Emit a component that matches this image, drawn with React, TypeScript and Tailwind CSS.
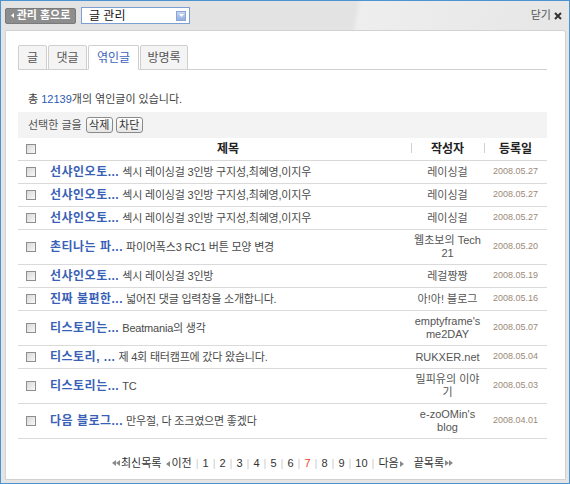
import React from "react";

interface Row {
  title: string;
  excerpt: string;
  author: string;
  date: string;
}

const rows: Row[] = [
  { title: "선샤인오토...", excerpt: "섹시 레이싱걸 3인방 구지성,최혜영,이지우", author: "레이싱걸", date: "2008.05.27" },
  { title: "선샤인오토...", excerpt: "섹시 레이싱걸 3인방 구지성,최혜영,이지우", author: "레이싱걸", date: "2008.05.27" },
  { title: "선샤인오토...", excerpt: "섹시 레이싱걸 3인방 구지성,최혜영,이지우", author: "레이싱걸", date: "2008.05.27" },
  { title: "촌티나는 파...", excerpt: "파이어폭스3 RC1 버튼 모양 변경", author: "웹초보의 Tech 21", date: "2008.05.20" },
  { title: "선샤인오토...", excerpt: "섹시 레이싱걸 3인방", author: "레걸짱짱", date: "2008.05.19" },
  { title: "진짜 불편한...", excerpt: "넓어진 댓글 입력창을 소개합니다.", author: "아!아! 블로그", date: "2008.05.16" },
  { title: "티스토리는...", excerpt: "Beatmania의 생각", author: "emptyframe's me2DAY", date: "2008.05.07" },
  { title: "티스토리, ...", excerpt: "제 4회 태터캠프에 갔다 왔습니다.", author: "RUKXER.net", date: "2008.05.04" },
  { title: "티스토리는...", excerpt: "TC", author: "밀피유의 이야기", date: "2008.05.03" },
  { title: "다음 블로그...", excerpt: "만우절, 다 조크였으면 좋겠다", author: "e-zoOMin's blog", date: "2008.04.01" },
];

const tabs = [
  { label: "글", w: "w-[29px]" },
  { label: "댓글", w: "w-[39px]" },
  { label: "엮인글", w: "w-[51px]", active: true },
  { label: "방명록", w: "w-[48px]" },
];

function Check() {
  return (
    <span className="block w-[10px] h-[10px] border border-[#8e8e8e] bg-[linear-gradient(135deg,#d8d8d8,#f8f8f8)]" />
  );
}

function Tri({ dir }: { dir: "left" | "right" }) {
  return (
    <svg width="4" height="6" viewBox="0 0 4 6" className="inline-block">
      {dir === "left" ? <path d="M4 0 L0 3 L4 6 Z" fill="#8a8a8a" /> : <path d="M0 0 L4 3 L0 6 Z" fill="#8a8a8a" />}
    </svg>
  );
}

function Sep() {
  return <span className="text-[#cccccc] mx-[4px]">|</span>;
}

export default function App() {
  const pages = [1, 2, 3, 4, 5, 6, 7, 8, 9, 10];

  return (
    <div className="w-[570px] h-[484px] border border-[#4b93d1] bg-[#e4e4e4] flex flex-col text-[11px] text-[#444] font-['Liberation_Sans','Noto_Sans_CJK_KR',sans-serif]">
      {/* 상단 바 */}
      <div className="h-[29px] flex items-center pl-[4px] pr-[7px] bg-[linear-gradient(100deg,#e3e3e3_62%,#eeeeee_63%,#e6e6e6_100%)]">
        <div className="h-[16px] w-[71px] flex items-center justify-center gap-[3px] rounded-[2px] border border-[#7a7a7a] bg-[#8d8d8d] text-white font-bold text-[11px]">
          <svg width="3" height="5" viewBox="0 0 3 5"><path d="M3 0 L0 2.5 L3 5 Z" fill="#fff" /></svg>
          관리 홈으로
        </div>
        <div className="ml-[5px] h-[17px] w-[109px] flex items-center justify-between border border-[#7c9fd3] bg-white pl-[7px] pr-[3px] text-[12px] text-[#111]">
          <span>글 관리</span>
          <span className="w-[10px] h-[10px] flex items-center justify-center border border-[#8aa6d6] bg-[linear-gradient(#c6d6f0,#93afe0)]">
            <svg width="5" height="3" viewBox="0 0 5 3"><path d="M0 0 L5 0 L2.5 3 Z" fill="#fff" /></svg>
          </span>
        </div>
        <div className="ml-auto flex items-center gap-[3px] text-[#555]">
          <span>닫기</span>
          <svg width="8" height="8" viewBox="0 0 8 8"><path d="M1 1 L7 7 M7 1 L1 7" stroke="#333" strokeWidth="2" /></svg>
        </div>
      </div>

      {/* 본문 패널 */}
      <div className="flex-1 ml-[4px] mr-[3px] mb-[3px] bg-white border border-[#d2d2d2] rounded-tr-[3px] pl-[12px] pr-[18px] pt-[14px]">
        {/* 탭 */}
        <div className="flex items-end gap-[1px] border-b border-[#cfcfcf] h-[25px]">
          {tabs.map((t) => (
            <div
              key={t.label}
              className={`${t.w} h-[25px] flex items-center justify-center border border-[#cfcfcf] rounded-t-[2px] text-[12px] -mb-[1px] ${
                t.active ? "bg-white border-b-white text-[#3c64c0]" : "bg-[#f4f4f4] text-[#555]"
              }`}
            >
              {t.label}
            </div>
          ))}
        </div>

        <div className="pl-[10px] pt-[21px] h-[42px] text-[11px] text-[#444]">
          총 <span className="text-[#2a5bb4]">12139</span>개의 엮인글이 있습니다.
        </div>

        {/* 선택 바 */}
        <div className="h-[26px] bg-[#f3f3f3] flex items-center pl-[10px] gap-[3px]">
          <span className="text-[#555] mr-[1px]">선택한 글을</span>
          <button className="h-[16px] w-[27px] rounded-[3px] border border-[#8a8a8a] bg-[linear-gradient(#ffffff,#e6e6e6)] text-[11px] text-[#333] leading-none">
            삭제
          </button>
          <button className="h-[16px] w-[27px] rounded-[3px] border border-[#8a8a8a] bg-[linear-gradient(#ffffff,#e6e6e6)] text-[11px] text-[#333] leading-none">
            차단
          </button>
        </div>

        {/* 목록 헤더 */}
        <div className="h-[23px] flex items-center border-b border-[#d8d8d8] font-bold text-[12px] text-[#222]">
          <div className="w-[27px] pl-[8px]">
            <Check />
          </div>
          <div className="flex-1 text-center">제목</div>
          <div className="w-[73px] relative text-center">
            <span className="absolute left-0 top-[3px] h-[10px] border-l border-[#d0d0d0]" />
            작성자
          </div>
          <div className="w-[63px] relative text-center">
            <span className="absolute left-0 top-[3px] h-[10px] border-l border-[#d0d0d0]" />
            등록일
          </div>
        </div>

        {rows.map((r, i) => (
          <div key={i} className="flex items-center min-h-[23px] border-b border-[#dadada]">
            <div className="w-[27px] pl-[8px]">
              <Check />
            </div>
            <div className="flex-1 pl-[5px] whitespace-nowrap overflow-hidden">
              <span className="font-bold text-[12px] text-[#3a5fb6] tracking-[0.5px]">{r.title}</span>{" "}
              <span className="text-[11px] text-[#4a4a4a] tracking-[-0.2px]">{r.excerpt}</span>
            </div>
            <div className="w-[73px] py-[4px] text-center leading-[13px] text-[11px] text-[#555]">
              {r.author}
            </div>
            <div className="w-[63px] text-center text-[9px] text-[#9b8a78]">{r.date}</div>
          </div>
        ))}

        {/* 페이지 */}
        <div className="flex items-center justify-center pt-[16px] text-[11px] text-[#333]">
          <span className="mr-[1px] flex"><Tri dir="left" /><Tri dir="left" /></span>
          <span>최신목록</span>
          <span className="ml-[5px] mr-[1px]"><Tri dir="left" /></span>
          <span>이전</span>
          {pages.map((p) => (
            <React.Fragment key={p}>
              <Sep />
              <span className={p === 7 ? "text-[#f0401c]" : ""}>{p}</span>
            </React.Fragment>
          ))}
          <Sep />
          <span>다음</span>
          <span className="ml-[1px]"><Tri dir="right" /></span>
          <span className="ml-[10px]">끝목록</span>
          <span className="ml-[1px] flex"><Tri dir="right" /><Tri dir="right" /></span>
        </div>
      </div>
    </div>
  );
}
